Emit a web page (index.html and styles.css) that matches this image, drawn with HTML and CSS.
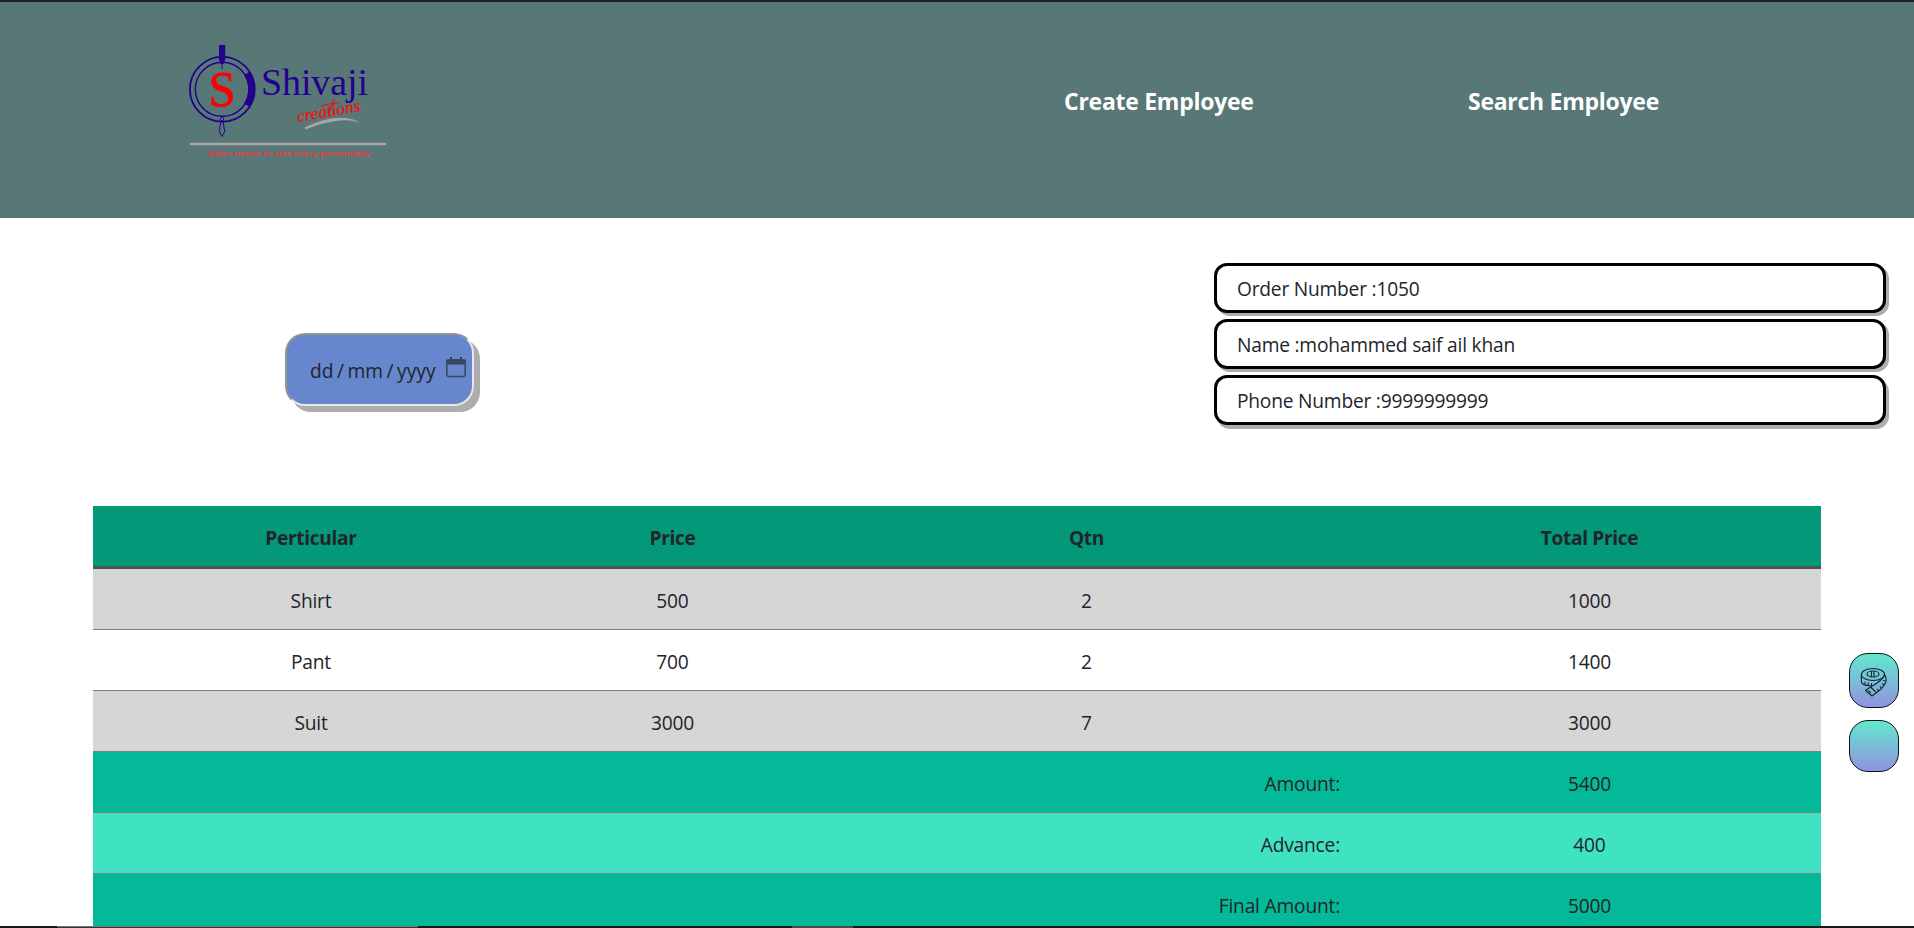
FILE: index.html
```html
<!DOCTYPE html>
<html lang="en">
<head>
<meta charset="utf-8">
<title>Shivaji Creations</title>
<link rel="stylesheet" href="styles.css">
</head>
<body>
<header class="header">
  <svg class="logo" viewBox="0 0 240 140" width="240" height="140">
    <g fill="none" stroke="#24008f">
      <circle cx="52.3" cy="59.3" r="32.4" stroke-width="1.8"/>
      <circle cx="52.3" cy="59.3" r="27" stroke-width="1.4"/>
      <path d="M76.7 43.5A29.5 29.5 0 0 1 76.7 75.1" stroke-width="6.4"/>
      <path d="M51 91L49.3 101.5L52 106.5L54.7 101.5L53 91Z" stroke-width="1"/>
      <circle cx="52" cy="89" r="1.7" stroke-width=".8"/>
    </g>
    <path d="M49 15h6.2v14l-1.6 5h-3L49 29z" fill="#24008f"/>
    <path d="M52 34v5" stroke="#24008f"/>
    <text class="logo-s" x="38.5" y="76.4" textLength="27" lengthAdjust="spacingAndGlyphs">S</text>
    <text class="logo-name" x="91" y="65" textLength="107" lengthAdjust="spacing">Shivaji</text>
    <text class="logo-script" transform="translate(128 92) rotate(-10)" textLength="64" lengthAdjust="spacingAndGlyphs">creations</text>
    <path d="M151 76.5Q158 73.5 169 73" stroke="#f20d0d" stroke-width="1.1" fill="none"/>
    <path d="M164 69L158 86" stroke="#f20d0d" stroke-width="1.2" fill="none"/>
    <path d="M134.5 97.5Q160 85 179 88.5Q186 90 189 92.5Q181 89.5 170 90.5Q153 92 135.5 99.5Z" fill="#a9a5a9"/>
    <path d="M20 114H216" stroke="#aaa6aa" stroke-width="2.6"/>
    <text class="logo-tag" x="37" y="126" textLength="163" lengthAdjust="spacingAndGlyphs">Tailor made to suit every personality</text>
  </svg>
  <nav class="nav">
    <a class="nav-link">Create Employee</a>
    <a class="nav-link">Search Employee</a>
  </nav>
</header>
<main>
  <section class="details">
    <div class="date">
      <span class="date-text">dd<i>/</i>mm<i>/</i>yyyy</span>
      <svg class="calendar" width="20" height="21" viewBox="0 0 20 21">
        <rect x=".8" y="3" width="18.4" height="16.6" rx="2" fill="none" stroke="#37485f" stroke-width="1.5"/>
        <path d="M2 2.2H4V0h2v2.2h8V0h2v2.2h2a2 2 0 0 1 2 2V7.5H0V4.2a2 2 0 0 1 2-2z" fill="#37485f"/>
      </svg>
    </div>
    <div class="customer">
      <div class="field">Order Number :1050</div>
      <div class="field">Name :mohammed saif ail khan</div>
      <div class="field last">Phone Number :9999999999</div>
    </div>
  </section>
  <table class="bill">
    <colgroup><col class="c1"><col class="c2"><col class="c3"><col class="c4"></colgroup>
    <thead><tr><th>Perticular</th><th>Price</th><th>Qtn</th><th>Total Price</th></tr></thead>
    <tbody>
      <tr class="odd"><td>Shirt</td><td>500</td><td>2</td><td>1000</td></tr>
      <tr><td>Pant</td><td>700</td><td>2</td><td>1400</td></tr>
      <tr class="odd"><td>Suit</td><td>3000</td><td>7</td><td>3000</td></tr>
    </tbody>
    <tfoot>
      <tr><td colspan="3">Amount:</td><td>5400</td></tr>
      <tr class="light"><td colspan="3">Advance:</td><td>400</td></tr>
      <tr><td colspan="3">Final Amount:</td><td>5000</td></tr>
    </tfoot>
  </table>
</main>
<aside class="tools">
  <button class="tool" aria-label="Measurements">
    <svg width="28" height="30" viewBox="0 0 28 30" fill="none" stroke="#10282d" stroke-width="1.1" stroke-linecap="round" stroke-linejoin="round">
      <ellipse cx="13" cy="7.5" rx="11.6" ry="6"/>
      <ellipse cx="13" cy="7" rx="6" ry="3"/>
      <path d="M11.5 4.5v5M14 4.5v5"/>
      <path d="M1.4 7.5V15Q2.5 18.6 10 18.7M24.6 7.5Q27 12 25.5 16Q22 22.5 12 29L5.5 23.5L10.5 20Q22.5 14 24.6 7.5"/>
      <path d="M5 15v2.5M8.3 16v2.5M11.5 16.5v2M10.5 20l5.3 5M8.5 23.8l2 1.8M18.5 23.5l-1.2-1.2M21.3 20.8l-1.2-1.2M23.7 17.8l-1.3-1M25 14l-1.4-.6"/>
    </svg>
  </button>
  <button class="tool second" aria-label="Tools"></button>
</aside>
<div class="taskbar"><span class="task-a"></span><span class="task-b"></span></div>
</body>
</html>
```
FILE: styles.css
```css
* { box-sizing: border-box; }
body {
  margin: 0;
  height: 928px;
  overflow: hidden;
  position: relative;
  background: #fff;
  color: #212529;
  font: 19.2px/30px "Open Sans", "Noto Sans", sans-serif;
  letter-spacing: -.2px;
}
.header {
  height: 218px;
  padding: 28px 0 0 170px;
  border-top: 2px solid #201f29;
  background: #587777;
  display: flex;
  align-items: flex-start;
}
.logo { flex: none; letter-spacing: 0; }
.logo-s { font: 51px "Liberation Serif", serif; fill: #f00; stroke: #f00; stroke-width: .8px; }
.logo-name { font: 38px "Liberation Serif", serif; fill: #24008f; }
.logo-script { font: italic 17px "Liberation Serif", serif; fill: #f20d0d; stroke: #f20d0d; stroke-width: .2px; }
.logo-tag { font: 7.6px "Liberation Sans", sans-serif; fill: #e63b40; stroke: #e63b40; stroke-width: .2px; }
.nav { display: flex; margin-left: 654px; padding-top: 53px; }
.nav-link { color: #fff; font-size: 23px; font-weight: 700; line-height: 36px; width: 404px; white-space: nowrap; letter-spacing: -.27px; }
.details {
  height: 288px;
  padding: 45px 28px 0 285px;
  display: flex;
  justify-content: space-between;
}
.date {
  width: 189px;
  height: 73px;
  margin-top: 70px;
  padding: 0 6px 0 23px;
  display: flex;
  align-items: center;
  justify-content: space-between;
  background: #6686ce;
  border: 2px solid;
  border-color: #969696 #e8e8e8 #e8e8e8 #969696;
  border-radius: 20px;
  box-shadow: 6px 6px 0 #adadad;
}
.date-text { white-space: nowrap; letter-spacing: 0; padding-top: 2px; }
.date-text i { font-style: normal; margin: 0 3.5px; }
.calendar { margin-top: -5px; }
.customer { width: 672px; display: flex; flex-direction: column; gap: 6px; }
.field {
  height: 50px;
  padding: 8px 20px;
  line-height: 29px;
  letter-spacing: -.22px;
  background: #fff;
  border: 3px solid #000;
  border-radius: 13px;
  box-shadow: 3px 3px 0 #adadad;
}
.last { box-shadow: 3px 4px 0 #adadad; }
.bill {
  width: 1728px;
  margin-left: 93px;
  table-layout: fixed;
  border-collapse: separate;
  border-spacing: 0;
  text-align: center;
}
.c1 { width: 436px; }
.c2 { width: 287px; }
.c3 { width: 541px; }
.c4 { width: 464px; }
.bill th { height: 63px; padding: 4px 0 0; background: #029878; border-bottom: 3px solid #545151; letter-spacing: -.35px; }
.bill td { height: 61px; padding: 4px 0 0; border-bottom: 1px solid #7c7f7f; }
.bill th:last-child, .bill td:last-child { padding-left: 1px; }
.odd { background: #d6d6d6; }
.bill tfoot tr { background: #04b998; }
.bill tfoot tr.light { background: #3fe2c1; }
.bill tfoot td:first-child { text-align: right; padding-right: 17px; }
.tools { position: absolute; left: 1849px; top: 653px; display: flex; flex-direction: column; gap: 12px; }
.tool {
  width: 50px;
  height: 55px;
  padding: 3px 0 0;
  border: 1px solid #081418;
  border-radius: 19px;
  background: linear-gradient(#62e8cd, #9292e0);
  display: flex;
  align-items: center;
  justify-content: center;
}
.second { height: 52px; }
.taskbar { position: absolute; left: 0; top: 926px; width: 1914px; height: 2px; background: #181a1a; display: flex; }
.task-a { width: 361px; margin-left: 57px; background: #343434; border-top: 1px solid #777; }
.task-b { width: 61px; margin-left: 374px; background: #484848; }
```
